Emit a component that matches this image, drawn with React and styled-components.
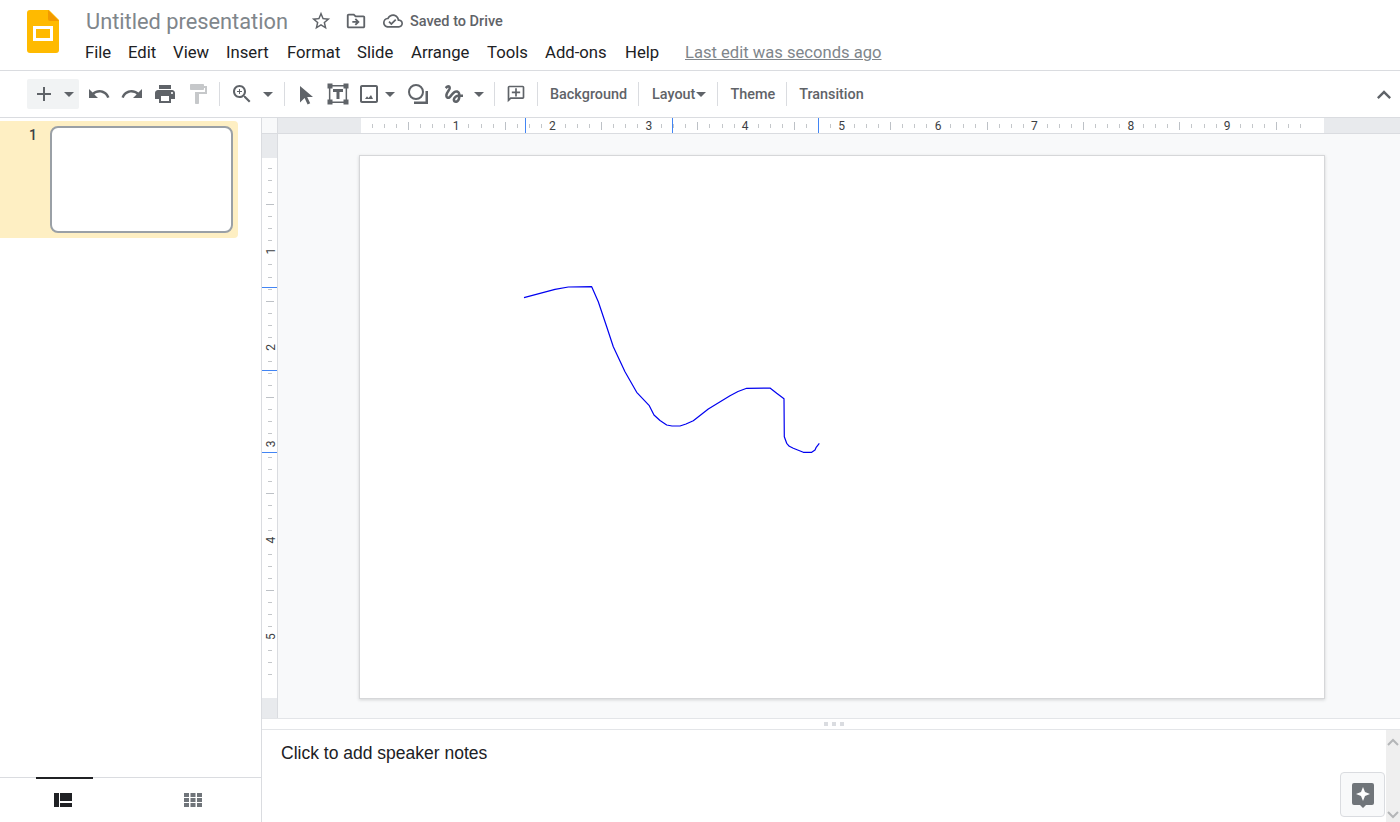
import React from "react"
import styled, { createGlobalStyle } from "styled-components"

const GlobalStyle = createGlobalStyle`
  html, body {
    margin: 0;
    padding: 0;
    height: 100%;
    overflow: hidden;
    background: #fff;
    font-family: Roboto, sans-serif;
  }
  * {
    box-sizing: border-box;
  }
`

const Page = styled.div`
  width: 1400px;
  height: 822px;
  display: flex;
  flex-direction: column;
  overflow: hidden;
`

const Header = styled.header`
  height: 71px;
  flex: none;
  display: flex;
  border-bottom: 1px solid #dadce0;
  padding-left: 27px;
`

const Logo = styled.svg`
  width: 32px;
  height: 43px;
  margin-top: 10px;
  flex: none;
`

const HeaderText = styled.div`
  margin-left: 26px;
  display: flex;
  flex-direction: column;
`

const TitleRow = styled.div`
  height: 30px;
  margin-top: 6px;
  display: flex;
  align-items: center;
`

const Title = styled.span`
  font-size: 21.8px;
  color: #80868b;
  margin-left: 1px;
  width: 202px;
  white-space: nowrap;
`

const HeaderIcon = styled.svg`
  width: ${p => p.$size || 22}px;
  height: ${p => p.$size || 22}px;
  fill: #5f6368;
  flex: none;
  margin-left: ${p => p.$left || 0}px;
`

const Saved = styled.span`
  font-size: 14.5px;
  font-weight: 500;
  color: #5f6368;
  margin-left: 7px;
  white-space: nowrap;
`

const MenuRow = styled.nav`
  display: flex;
  align-items: center;
  height: 24px;
  margin-top: 4px;
`

const MenuItem = styled.span`
  font-size: 16.7px;
  color: #202124;
  width: ${p => p.$w}px;
  flex: none;
  white-space: nowrap;
`

const LastEdit = styled.span`
  font-size: 16.6px;
  color: #80868b;
  text-decoration: underline;
  white-space: nowrap;
`

const Toolbar = styled.div`
  height: 47px;
  flex: none;
  display: flex;
  align-items: center;
  padding-left: 27px;
  border-bottom: 1px solid #dadce0;
  position: relative;
`

const NewButton = styled.div`
  width: 52px;
  height: 30px;
  background: #f1f3f4;
  border-radius: 2px;
  display: flex;
  align-items: center;
  padding-left: 5px;
  flex: none;
`

const ToolIcon = styled.svg`
  width: ${p => p.$size || 24}px;
  height: ${p => p.$size || 24}px;
  fill: ${p => p.$fill || "#5f6368"};
  flex: none;
  margin-left: ${p => p.$left || 0}px;
`

const Caret = styled.i`
  width: 0;
  height: 0;
  flex: none;
  border-left: 5px solid transparent;
  border-right: 5px solid transparent;
  border-top: 5px solid #5f6368;
  margin-left: ${p => p.$left || 0}px;
`

const Divider = styled.i`
  width: 1px;
  height: 24px;
  background: #dadce0;
  flex: none;
  margin-left: ${p => p.$left || 0}px;
`

const ToolText = styled.span`
  font-size: 14.4px;
  font-weight: 500;
  color: #5f6368;
  flex: none;
  white-space: nowrap;
  margin-left: ${p => p.$left || 0}px;
`

const Collapse = styled.svg`
  position: absolute;
  right: 2px;
  top: 10px;
  width: 28px;
  height: 28px;
  fill: #5f6368;
`

const Body = styled.div`
  flex: 1;
  display: flex;
  min-height: 0;
`

const Sidebar = styled.aside`
  width: 262px;
  flex: none;
  border-right: 1px solid #dadce0;
  display: flex;
  flex-direction: column;
`

const FilmStrip = styled.div`
  flex: 1;
  padding-top: 3px;
  border-bottom: 1px solid #dadce0;
`

const SlideRow = styled.div`
  width: 238px;
  height: 117px;
  background: #feefc3;
  border-radius: 0 4px 4px 0;
  display: flex;
  padding: 5px 5px 5px 29px;
`

const SlideNumber = styled.span`
  width: 21px;
  font-size: 14px;
  line-height: 18px;
  font-weight: 500;
  color: #3c4043;
`

const Thumb = styled.div`
  flex: 1;
  background: #fff;
  border: 2px solid #9aa0a6;
  border-radius: 8px;
`

const ViewTabs = styled.div`
  height: 44px;
  flex: none;
  display: flex;
  position: relative;
`

const ViewTab = styled.div`
  width: ${p => p.$w}px;
  display: flex;
  justify-content: center;
  padding-top: 13px;
`

const TabMark = styled.i`
  position: absolute;
  left: 36px;
  top: -1px;
  width: 57px;
  height: 2px;
  background: #202124;
`

const Main = styled.main`
  flex: 1;
  min-width: 0;
  display: flex;
  flex-direction: column;
`

const TopRuler = styled.div`
  height: 16px;
  flex: none;
  display: flex;
  border-bottom: 1px solid #dadce0;
`

const RulerCorner = styled.div`
  width: 16px;
  flex: none;
  background: #f8f9fa;
  border-right: 1px solid #dadce0;
`

const RulerGutter = styled.div`
  width: ${p => (p.$w ? `${p.$w}px` : "auto")};
  flex: ${p => (p.$w ? "none" : "1")};
  background: #e8eaed;
`

const Work = styled.div`
  height: 584px;
  flex: none;
  display: flex;
`

const SideRuler = styled.div`
  width: 16px;
  flex: none;
  display: flex;
  flex-direction: column;
  border-right: 1px solid #dadce0;
`

const SideGutter = styled.div`
  height: ${p => (p.$h ? `${p.$h}px` : "auto")};
  flex: ${p => (p.$h ? "none" : "1")};
  background: #e8eaed;
`

const RulerSvg = styled.svg`
  display: block;
  flex: none;
  background: #fff;
`

const RulerNumber = styled.text`
  font-family: Roboto, sans-serif;
  font-size: 12px;
  fill: #3c4043;
  text-anchor: middle;
`

const Canvas = styled.div`
  flex: 1;
  background: #f8f9fa;
  padding: 21px 0 0 81px;
`

const SlideSheet = styled.div`
  width: 966px;
  height: 544px;
  background: #fff;
  border: 1px solid #d6d7d9;
  box-shadow: 0 1px 3px rgba(60, 64, 67, 0.2);
`

const Grip = styled.div`
  height: 12px;
  flex: none;
  border-top: 1px solid #e3e5e8;
  border-bottom: 1px solid #e3e5e8;
  display: flex;
  align-items: center;
  justify-content: center;
  gap: 4px;
  padding-left: 6px;
`

const GripDot = styled.i`
  width: 4px;
  height: 4px;
  background: #dadce0;
`

const Notes = styled.section`
  flex: 1;
  position: relative;
  padding: 13px 0 0 19px;
  font-family: "Liberation Sans", Arial, sans-serif;
  font-size: 17.5px;
  line-height: 21px;
  color: #202124;
`

const ScrollBar = styled.div`
  position: absolute;
  right: 0;
  top: 0;
  bottom: 0;
  width: 14px;
  background: #efefef;
  display: flex;
  flex-direction: column;
  justify-content: space-between;
  align-items: center;
  padding: 7px 0 2px;
`

const ScrollArrow = styled.svg`
  width: 12px;
  height: 12px;
  fill: none;
  stroke: #b4b6b8;
  stroke-width: 2;
`

const AssistButton = styled.div`
  position: absolute;
  right: 15px;
  top: 42px;
  width: 45px;
  height: 45px;
  border: 1px solid #dadce0;
  border-radius: 4px;
  background: #f8f9fa;
  display: flex;
  align-items: center;
  justify-content: center;
`

const marks = (count, fn) => Array.from({ length: count }, (_, i) => fn(i))

// one inch is 96.4px, a tick every eighth
const INCH = 96.4

const HRuler = () => (
  <RulerSvg width="963" height="15" viewBox="361 118 963 15">
    {marks(79, i => {
      const x = 360 + (i * INCH) / 8
      if (i === 0 || i % 8 === 0) return null
      const half = i % 4 === 0
      return (
        <rect
          key={i}
          x={Math.round(x)}
          y={half ? 122 : 124}
          width="1"
          height={half ? 8 : 4}
          fill={half ? "#bdc1c6" : "#c4c7ca"}
        />
      )
    })}
    {marks(9, i => (
      <RulerNumber key={i} x={456 + i * INCH} y="130">
        {i + 1}
      </RulerNumber>
    ))}
    {[525, 672, 818].map(x => (
      <rect key={x} x={x} y="118" width="1" height="15" fill="#4285f4" />
    ))}
  </RulerSvg>
)

const VRuler = () => (
  <RulerSvg width="15" height="540" viewBox="262 158 15 540">
    {marks(44, i => {
      const y = 156 + (i * INCH) / 8
      if (i % 8 === 0) return null
      const half = i % 4 === 0
      return (
        <rect
          key={i}
          x={half ? 266 : 268}
          y={Math.round(y)}
          width={half ? 8 : 4}
          height="1"
          fill={half ? "#bdc1c6" : "#c4c7ca"}
        />
      )
    })}
    {marks(5, i => {
      const y = 251 + i * INCH
      return (
        <RulerNumber key={i} x="0" y="0" transform={`translate(275 ${y}) rotate(-90)`}>
          {i + 1}
        </RulerNumber>
      )
    })}
    {[287, 370, 452].map(y => (
      <rect key={y} x="262" y={y} width="15" height="1" fill="#4285f4" />
    ))}
  </RulerSvg>
)

const Scribble = () => (
  <svg width="964" height="542" viewBox="360 156 964 542" style={{ display: "block" }}>
    <polyline
      fill="none"
      stroke="#0000f0"
      strokeWidth="1.2"
      strokeLinejoin="round"
      points="524,297.7 555,289.3 568.3,287 591.7,286.7 598.3,301.7 606.7,326.7 613.3,346.7 625,371.7 636.7,392.3 649.3,405.7 654,415 660,420.5 666.7,425 672,426 680,426 686,424 693.3,420.7 708.3,409 730,395.7 738,391.500 746.7,388.3 770,388 776.7,393.3 784,398.7 784.3,436.7 786.7,443.3 789.3,446.3 793.3,448.3 798.3,450.300 803.3,452.3 811.7,452.3 815,450 816,447.700 819.3,443.3"
    />
  </svg>
)

const App = () => (
  <Page>
    <GlobalStyle />
    <Header>
      <Logo viewBox="0 0 32 43">
        <path d="M3 0h19l10 10v30a3 3 0 0 1-3 3H3a3 3 0 0 1-3-3V3a3 3 0 0 1 3-3z" fill="#ffba00" />
        <path d="M21 0l11 11H23a2 2 0 0 1-2-2z" fill="#f29900" />
        <path d="M6 16h20v15H6zm3 3v9h14v-9z" fill="#fff" fillRule="evenodd" />
      </Logo>
      <HeaderText>
        <TitleRow>
          <Title>Untitled presentation</Title>
          <HeaderIcon $left={22} viewBox="0 0 24 24">
            <path d="M22 9.24l-7.19-.62L12 2 9.19 8.63 2 9.24l5.46 4.73L5.82 21 12 17.27 18.18 21l-1.63-7.03L22 9.24zM12 15.4l-3.76 2.27 1-4.28-3.32-2.88 4.38-.38L12 6.1l1.71 4.04 4.38.38-3.32 2.88 1 4.28L12 15.4z" />
          </HeaderIcon>
          <HeaderIcon $left={13} viewBox="0 0 24 24">
            <path d="M20 6h-8l-2-2H4c-1.1 0-1.99.9-1.99 2L2 18c0 1.1.9 2 2 2h16c1.1 0 2-.9 2-2V8c0-1.1-.9-2-2-2zm0 12H4V6h5.17l2 2H20v10z" />
            <path d="M12.16 12H8v2h4.16l-1.59 1.59L11.99 17 16 13.01 11.99 9l-1.41 1.41z" />
          </HeaderIcon>
          <HeaderIcon $left={16} $size={20} viewBox="0 0 24 24">
            <path d="M19.35 10.04C18.67 6.59 15.64 4 12 4 9.11 4 6.6 5.64 5.35 8.04 2.34 8.36 0 10.91 0 14c0 3.31 2.69 6 6 6h13c2.76 0 5-2.24 5-5 0-2.64-2.05-4.78-4.65-4.96zM19 18H6c-2.21 0-4-1.79-4-4 0-2.05 1.53-3.76 3.56-3.97l1.07-.11.5-.95C8.08 7.14 9.94 6 12 6c2.62 0 4.88 1.86 5.39 4.43l.3 1.5 1.53.11c1.56.1 2.78 1.41 2.78 2.96 0 1.65-1.35 3-3 3zm-9-3.82l-2.09-2.09L6.5 13.5 10 17l6.01-6.01-1.41-1.41z" />
          </HeaderIcon>
          <Saved>Saved to Drive</Saved>
        </TitleRow>
        <MenuRow>
          <MenuItem $w={43}>File</MenuItem>
          <MenuItem $w={45}>Edit</MenuItem>
          <MenuItem $w={53}>View</MenuItem>
          <MenuItem $w={61}>Insert</MenuItem>
          <MenuItem $w={70}>Format</MenuItem>
          <MenuItem $w={54}>Slide</MenuItem>
          <MenuItem $w={76}>Arrange</MenuItem>
          <MenuItem $w={58}>Tools</MenuItem>
          <MenuItem $w={80}>Add-ons</MenuItem>
          <MenuItem $w={60}>Help</MenuItem>
          <LastEdit>Last edit was seconds ago</LastEdit>
        </MenuRow>
      </HeaderText>
    </Header>
    <Toolbar>
      <NewButton>
        <ToolIcon viewBox="0 0 24 24">
          <path d="M19 13h-6v6h-2v-6H5v-2h6V5h2v6h6v2z" />
        </ToolIcon>
        <Caret $left={8} />
      </NewButton>
      <ToolIcon $left={8} viewBox="0 0 24 24">
        <path d="M12.5 8c-2.65 0-5.05.99-6.9 2.6L2 7v9h9l-3.62-3.62c1.39-1.16 3.16-1.88 5.12-1.88 3.54 0 6.55 2.31 7.6 5.5l2.37-.78C21.08 11.03 17.15 8 12.5 8z" />
      </ToolIcon>
      <ToolIcon $left={9} viewBox="0 0 24 24">
        <path d="M18.4 10.6C16.55 8.99 14.15 8 11.5 8c-4.65 0-8.58 3.03-9.96 7.22L3.9 16c1.05-3.19 4.05-5.5 7.6-5.5 1.95 0 3.73.72 5.12 1.88L13 16h9V7l-3.6 3.6z" />
      </ToolIcon>
      <ToolIcon $left={9} viewBox="0 0 24 24">
        <path d="M19 8H5c-1.66 0-3 1.34-3 3v6h4v4h12v-4h4v-6c0-1.66-1.34-3-3-3zm-3 11H8v-5h8v5zm3-7c-.55 0-1-.45-1-1s.45-1 1-1 1 .45 1 1-.45 1-1 1zm-1-9H6v4h12V3z" />
      </ToolIcon>
      <ToolIcon $left={9} $fill="#c6c8ca" viewBox="0 0 24 24">
        <path d="M18 4V3c0-.55-.45-1-1-1H5c-.55 0-1 .45-1 1v4c0 .55.45 1 1 1h12c.55 0 1-.45 1-1V6h1v4H9v11c0 .55.45 1 1 1h2c.55 0 1-.45 1-1v-9h8V4h-3z" />
      </ToolIcon>
      <Divider $left={9} />
      <ToolIcon $left={10} viewBox="0 0 24 24">
        <path d="M15.5 14h-.79l-.28-.27C15.41 12.59 16 11.11 16 9.5 16 5.91 13.09 3 9.5 3S3 5.91 3 9.5 5.91 16 9.5 16c1.61 0 3.09-.59 4.23-1.57l.27.28v.79l5 4.99L20.49 19l-4.99-5zm-6 0C7.01 14 5 11.99 5 9.5S7.01 5 9.5 5 14 7.01 14 9.5 11.99 14 9.5 14z" />
        <path d="M12 10h-2v2H9v-2H7V9h2V7h1v2h2v1z" />
      </ToolIcon>
      <Caret $left={9} />
      <Divider $left={11} />
      <ToolIcon $left={8} viewBox="0 0 24 24">
        <path d="M7 4v16.5l4.6-4.5 3 6.5 2.6-1.2-3-6.3H20z" />
      </ToolIcon>
      <ToolIcon $left={9} viewBox="0 0 24 24">
        <path
          fillRule="evenodd"
          d="M1.5 1.5h5v1.4h10.999V1.5h5v5h-1.4v11h1.4v5h-5v-1.4H6.5v1.4h-5v-5h1.4v-11H1.500zM4.4 6.500v11h2.100v2.100h11v-2.100h2.100v-11h-2.100V4.400h-11v2.100z"
        />
        <path d="M7 7h10v3h-3.500v7h-3v-7H7z" />
      </ToolIcon>
      <ToolIcon $left={7} viewBox="0 0 24 24">
        <path d="M19 3H5c-1.100 0-2 .9-2 2v14c0 1.100.9 2 2 2h14c1.100 0 2-.9 2-2V5c0-1.100-.9-2-2-2zm0 16H5V5h14v14z" />
        <path d="M14 13l-2.500 3-1.500-1.800L8 17h8z" />
      </ToolIcon>
      <Caret $left={4} />
      <ToolIcon $left={11} viewBox="0 0 24 24">
        <path
          fillRule="evenodd"
          d="M10 2a8 8 0 1 1 0 16 8 8 0 0 1 0-16zm0 2a6 6 0 1 0 0 12 6 6 0 0 0 0-12z"
        />
        <path d="M19 9h3v13H8v-2.500h11.500V9z" />
      </ToolIcon>
      <ToolIcon $left={12} viewBox="0 0 24 24">
        <path d="M4.59 6.89c.7-.71 1.4-1.35 1.71-1.22.5.2 0 1.03-.3 1.52-.25.42-2.86 3.89-2.86 6.31 0 1.28.48 2.34 1.34 2.98.75.56 1.74.73 2.64.46 1.07-.31 1.95-1.4 3.06-2.77 1.21-1.49 2.83-3.44 4.08-3.44 1.63 0 1.65 1.01 1.76 1.79-3.78.64-5.38 3.67-5.38 5.37 0 1.7 1.44 3.09 3.21 3.09 1.63 0 4.29-1.33 4.69-6.1H21v-2.5h-2.47c-.15-1.65-1.09-4.2-4.03-4.2-2.25 0-4.18 1.91-4.94 2.84-.58.73-2.06 2.48-2.29 2.72-.25.3-.68.84-1.11.84-.45 0-.72-.83-.36-1.92.35-1.09 1.4-2.86 1.85-3.52.78-1.14 1.3-1.92 1.3-3.28C8.95 3.69 7.31 3 6.44 3 5.12 3 3.97 4 3.72 4.25c-.36.36-.66.66-.88.93l1.75 1.71zm9.29 11.66c-.31 0-.74-.26-.74-.72 0-.6.73-2.2 2.87-2.76-.3 2.69-1.43 3.48-2.13 3.48z" />
      </ToolIcon>
      <Caret $left={8} />
      <Divider $left={10} />
      <ToolIcon $left={11} $size={20} viewBox="0 0 24 24">
        <path d="M20 2H4c-1.100 0-2 .9-2 2v18l4-4h14c1.100 0 2-.9 2-2V4c0-1.100-.9-2-2-2zm0 14H5.170L4 17.170V4h16v12z" />
        <path d="M13 5h-2v4H7v2h4v4h2v-4h4V9h-4z" />
      </ToolIcon>
      <Divider $left={11} />
      <ToolText $left={12}>Background</ToolText>
      <Divider $left={11} />
      <ToolText $left={13}>Layout</ToolText>
      <Caret $left={1} />
      <Divider $left={11} />
      <ToolText $left={12}>Theme</ToolText>
      <Divider $left={11} />
      <ToolText $left={12}>Transition</ToolText>
      <Collapse viewBox="0 0 24 24">
        <path d="M12 8l-6 6 1.410 1.410L12 10.830l4.590 4.580L18 14z" />
      </Collapse>
    </Toolbar>
    <Body>
      <Sidebar>
        <FilmStrip>
          <SlideRow>
            <SlideNumber>1</SlideNumber>
            <Thumb />
          </SlideRow>
        </FilmStrip>
        <ViewTabs>
          <TabMark />
          <ViewTab $w={125}>
            <svg width="18" height="18" viewBox="0 0 18 18" fill="#202124">
              <path d="M0 2h5v14H0zM6 2h12v8H6zM6 12h12v4H6z" />
            </svg>
          </ViewTab>
          <ViewTab $w={136}>
            <svg width="18" height="18" viewBox="0 0 18 18" fill="#70757a">
              <path d="M0 2h5v4H0zM6.500 2h5v4h-5zM13 2h5v4h-5zM0 7h5v4H0zM6.500 7h5v4h-5zM13 7h5v4h-5zM0 12h5v4H0zM6.500 12h5v4h-5zM13 12h5v4h-5z" />
            </svg>
          </ViewTab>
        </ViewTabs>
      </Sidebar>
      <Main>
        <TopRuler>
          <RulerCorner />
          <RulerGutter $w={83} />
          <HRuler />
          <RulerGutter />
        </TopRuler>
        <Work>
          <SideRuler>
            <SideGutter $h={24} />
            <VRuler />
            <SideGutter />
          </SideRuler>
          <Canvas>
            <SlideSheet>
              <Scribble />
            </SlideSheet>
          </Canvas>
        </Work>
        <Grip>
          <GripDot />
          <GripDot />
          <GripDot />
        </Grip>
        <Notes>
          Click to add speaker notes
          <ScrollBar>
            <ScrollArrow viewBox="0 0 12 12">
              <path d="M1 8l5-5 5 5" />
            </ScrollArrow>
            <ScrollArrow viewBox="0 0 12 12">
              <path d="M1 4l5 5 5-5" />
            </ScrollArrow>
          </ScrollBar>
          <AssistButton>
            <svg width="24" height="28" viewBox="0 0 24 28">
              <path
                d="M3 2h18a2 2 0 0 1 2 2v18a2 2 0 0 1-2 2h-6l-3 3-3-3H3a2 2 0 0 1-2-2V4a2 2 0 0 1 2-2z"
                fill="#70757a"
              />
              <path d="M12 6l2 5 5 2-5 2-2 5-2-5-5-2 5-2z" fill="#fff" />
            </svg>
          </AssistButton>
        </Notes>
      </Main>
    </Body>
  </Page>
)

export default App
